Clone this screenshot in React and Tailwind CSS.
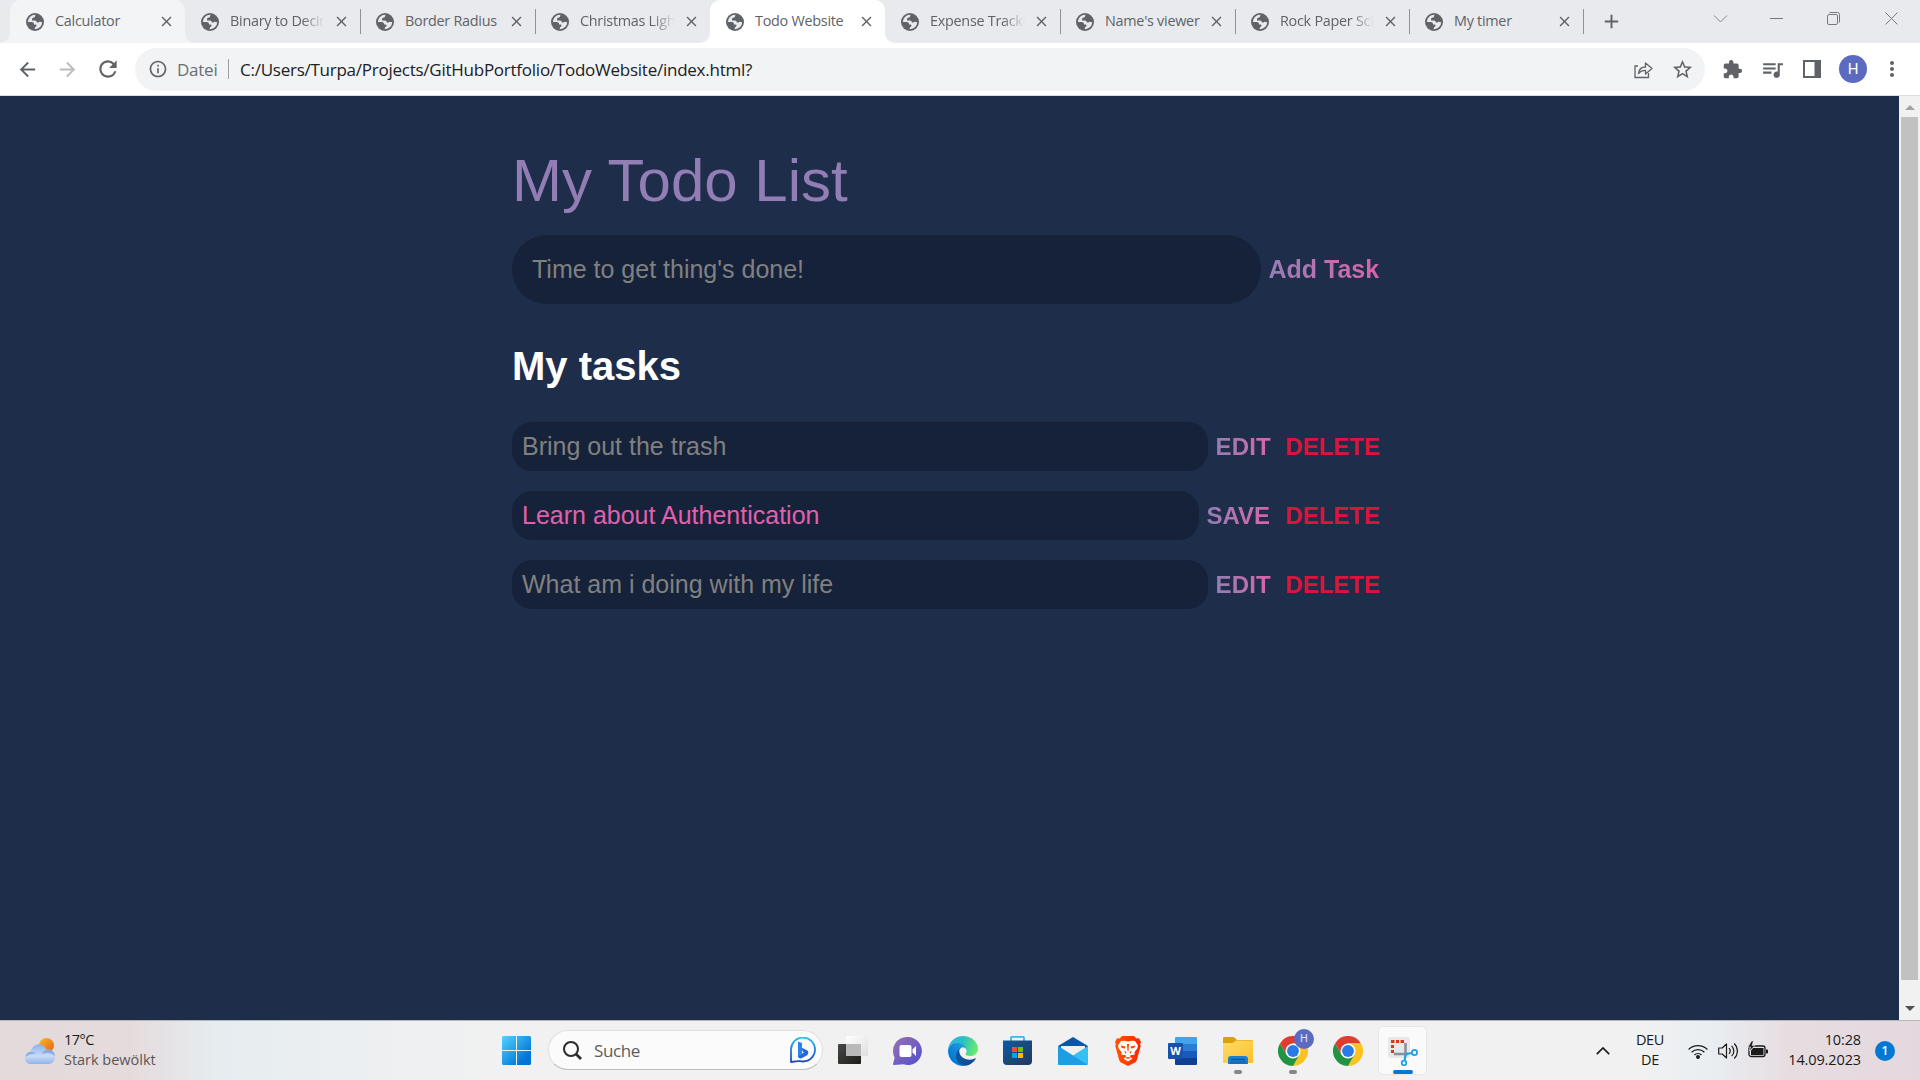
import React from "react";
import {
  MdArrowBack, MdArrowForward, MdRefresh, MdInfoOutline, MdStarBorder,
  MdExtension, MdQueueMusic, MdMoreVert, MdAdd, MdClose,
} from "react-icons/md";

const UI = "font-['Open_Sans','Noto_Sans',sans-serif]";

function Globe() {
  return (
    <svg viewBox="0 0 18 18" className="h-[18px] w-[18px] shrink-0">
      <circle cx="9" cy="9" r="9" fill="#5f6368" />
      <circle cx="9" cy="9" r="7.200" fill="#e8eaed" />
      <path d="M9.800 1.500C8.800 2.700 9.500 3.700 8.500 4.300 6.500 4.800 6 5.300 6 6.700v.9h3c1.100 0 1.800.8 1.800 2h1.700c.6-1.200 1.500-.9 4.200-.3A7.700 7.700 0 0 0 9.800 1.500z" fill="#5f6368" />
      <path d="M1.500 9h4c2 0 2.700 1 2.500 2.600h1.500c1.100 0 1.400 1 .6 1.800-1 .5-1.500 1.300-1.400 3.100A7.400 7.400 0 0 1 1.500 9z" fill="#5f6368" />
    </svg>
  );
}

const tabs = [
  { t: "Calculator", kind: "hover" },
  { t: "Binary to Decimal", sep: true, fade: true },
  { t: "Border Radius", sep: true },
  { t: "Christmas Lights", fade: true },
  { t: "Todo Website", kind: "active" },
  { t: "Expense Tracker", sep: true, fade: true },
  { t: "Name's viewer", sep: true },
  { t: "Rock Paper Scissors", sep: true, fade: true, narrow: true },
  { t: "My timer", sep: true, narrow: true },
];

function Tab({ tab }) {
  const active = tab.kind === "active";
  const hover = tab.kind === "hover";
  const fill = active ? "bg-white" : hover ? "bg-[#f3f4f6]" : "";
  const color = active ? "#ffffff" : "#f3f4f6";
  return (
    <div className={`relative flex h-[43px] shrink-0 items-center rounded-t-[10px] pl-4 ${tab.narrow ? "w-[174px]" : "w-[175px]"} ${fill}`}>
      {(active || hover) && (
        <>
          <svg viewBox="0 0 10 10" className="absolute bottom-0 -left-[10px] h-[10px] w-[10px]"><path d="M10 0v10H0A10 10 0 0 0 10 0z" fill={color} /></svg>
          <svg viewBox="0 0 10 10" className="absolute bottom-0 -right-[10px] h-[10px] w-[10px]"><path d="M0 0v10h10A10 10 0 0 1 0 0z" fill={color} /></svg>
        </>
      )}
      <Globe />
      <div className={`ml-[11px] h-[22px] overflow-hidden text-[14.400px] leading-[20px] tracking-[-0.27px] whitespace-nowrap text-[#5f6368] ${tab.narrow ? "w-[94px]" : "w-[95px]"} ${tab.fade ? "[mask-image:linear-gradient(to_right,black_76%,transparent)]" : ""}`}>
        {tab.t}
      </div>
      <MdClose className="ml-[8px] h-[17px] w-[17px] shrink-0 text-[#5f6368]" />
      {tab.sep && <div className="-mr-px ml-auto h-[25px] w-px bg-[#8f9297]" />}
    </div>
  );
}

function TabStrip() {
  return (
    <div className="flex h-[43px] bg-[#e8eaed] pl-[10px]">
      {tabs.map((t) => <Tab key={t.t} tab={t} />)}
      <MdAdd className="mt-[10px] ml-[17px] h-[23px] w-[23px] text-[#5f6368]" />
      <div className="mt-[11px] mr-[21px] ml-auto flex">
        <svg viewBox="0 0 15 15" className="h-[15px] w-[15px]" fill="none" stroke="#85888c"><path d="M1 4.500l6.500 6.500L14 4.500" /></svg>
        <svg viewBox="0 0 15 15" className="ml-[41px] h-[15px] w-[15px]" fill="none" stroke="#77797d"><path d="M1 7.500h13" /></svg>
        <svg viewBox="0 0 15 15" className="ml-[42px] h-[15px] w-[15px]" fill="none" stroke="#77797d"><rect x="1.500" y="3.500" width="10" height="10" rx="1.500" /><path d="M3.500 1.500h8a2 2 0 0 1 2 2v8" /></svg>
        <svg viewBox="0 0 15 15" className="ml-[43px] h-[15px] w-[15px]" fill="none" stroke="#77797d"><path d="M1.500 1.500l12 12M13.500 1.500l-12 12" /></svg>
      </div>
    </div>
  );
}

function Toolbar() {
  return (
    <div className="flex h-[53px] items-center border-b border-[#dadce0] bg-white pl-[16px]">
      <MdArrowBack className="h-[23px] w-[23px] text-[#5f6368]" />
      <MdArrowForward className="ml-[17px] h-[23px] w-[23px] text-[#babcbe]" />
      <MdRefresh className="ml-[16px] h-[26px] w-[26px] text-[#5f6368]" />
      <div className="ml-[14px] flex h-[43px] w-[1570px] items-center rounded-full bg-[#f1f3f4] pl-[13px]">
        <MdInfoOutline className="h-[20px] w-[20px] text-[#5f6368]" />
        <span className="mt-px ml-[9px] w-[51px] text-[17px] leading-[22px] tracking-[-0.25px] text-[#6a6e73]">Datei</span>
        <div className="h-5 w-px bg-[#9aa0a6]" />
        <span className="mt-px ml-[11px] text-[17px] leading-[22px] tracking-[-0.25px] text-[#202124]">C:/Users/Turpa/Projects/GitHubPortfolio/TodoWebsite/index.html?</span>
        <svg viewBox="0 0 19 19" className="ml-auto h-[19px] w-[19px]" fill="none" stroke="#5f6368" strokeWidth="1.300"><path d="M4 6H1v11.500h13.500V13" /><path d="M4.500 13.500c.5-4.500 3-6.500 7-6.500V3l6.500 5.500-6.500 5.500v-3.700c-3 0-5.200.8-7 3.200z" strokeLinejoin="round" /></svg>
        <MdStarBorder className="mr-[11px] ml-[18px] h-[23px] w-[23px] text-[#5f6368]" />
      </div>
      <MdExtension className="ml-[17px] h-[21px] w-[21px] text-[#5f6368]" />
      <MdQueueMusic className="ml-[17px] h-[25px] w-[25px] text-[#5f6368]" />
      <svg viewBox="0 0 18 18" className="ml-[18px] h-[18px] w-[18px]"><path d="M0 0h18v18H0zM2 2v14h9.500V2z" fill="#5f6368" fillRule="evenodd" /></svg>
      <div className="ml-[18px] flex h-[28px] w-[28px] items-center justify-center rounded-full bg-[#5c6bc0] font-['Roboto',sans-serif] text-[15px] text-white">H</div>
      <MdMoreVert className="ml-[13px] h-[24px] w-[24px] text-[#5f6368]" />
    </div>
  );
}

const tasks = [
  { text: "Bring out the trash", action: "EDIT" },
  { text: "Learn about Authentication", action: "SAVE" },
  { text: "What am i doing with my life", action: "EDIT" },
];

function TodoPage() {
  return (
    <div className="flex h-[924px] bg-[#1e2e4a]">
      <main className="ml-[512px] w-[868px] font-['Liberation_Sans',Arial,sans-serif]">
        <h1 className="mt-[50px] h-[69px] text-[60px] leading-[69px] text-[#937db5]">My Todo List</h1>
        <div className="mt-[20px] flex h-[69px] items-center">
          <div className="flex h-[69px] w-[749px] items-center rounded-[35px] bg-[#162239] pl-[20px] text-[25px] text-[#808080]">Time to get thing's done!</div>
          <button className="ml-[7.500px] bg-gradient-to-r from-[#937db5] to-[#dd60a8] bg-clip-text text-[25px] font-bold whitespace-nowrap text-transparent">Add Task</button>
        </div>
        <h2 className="mt-[39px] h-[46px] text-[40px] leading-[46px] font-bold text-white">My tasks</h2>
        <div className="mt-[33px] flex flex-col gap-[20px]">
          {tasks.map((t) => (
            <div key={t.text} className="flex h-[49px] items-center">
              <div className={`flex h-[49px] items-center rounded-[20px] bg-[#162239] pl-[10px] text-[25px] ${t.action === "SAVE" ? "w-[687px] text-[#e160ae]" : "w-[696px] text-[#808080]"}`}>{t.text}</div>
              <button className={`ml-[7.500px] bg-gradient-to-r from-[#937db5] to-[#dd60a8] bg-clip-text text-left text-[24px] font-bold text-transparent ${t.action === "SAVE" ? "w-[64px]" : "w-[57px] tracking-[0.15px]"}`}>{t.action}</button>
              <button className="ml-auto text-[24px] font-bold text-[#dc143c]">DELETE</button>
            </div>
          ))}
        </div>
      </main>
      <div className="ml-auto flex w-[21px] flex-col items-center bg-[#f1f1f1]">
        <svg viewBox="0 0 10 5" className="mt-[9px] h-[5px] w-[10px]"><path d="M5 0l5 5H0z" fill="#a3a3a3" /></svg>
        <div className="mt-[7px] h-[863px] w-[17px] bg-[#c1c1c1]" />
        <svg viewBox="0 0 10 5" className="mt-[26px] h-[5px] w-[10px]"><path d="M0 0h10L5 5z" fill="#505050" /></svg>
      </div>
    </div>
  );
}

function Weather() {
  return (
    <svg viewBox="0 0 30 26" className="h-[26px] w-[30px]">
      <defs>
        <linearGradient id="sun" x1="0" y1="0" x2="1" y2="1"><stop offset="0" stopColor="#f6b92c" /><stop offset="1" stopColor="#ea5f0c" /></linearGradient>
        <linearGradient id="cloud" x1="0" y1="0" x2="0" y2="1"><stop offset="0" stopColor="#8fb0ee" /><stop offset=".6" stopColor="#c9dbf6" /><stop offset="1" stopColor="#8fb3ef" /></linearGradient>
      </defs>
      <circle cx="21.500" cy="7.500" r="7.500" fill="url(#sun)" />
      <path d="M6 26a6 6 0 0 1-.5-12C7 9 10 6 14 6.500c4 0 6.500 2.500 7 5 5-1 9 2.500 9 7.500 0 4-2.500 7-6.500 7z" fill="url(#cloud)" />
      <path d="M17 16c1-3 3-4.500 6-4.500 4 0 7 3 7 7-3-4-8-5-13-2.500zM1 17c2-4 7-4 10-1-4-1-7 0-10.500 3z" fill="#6d93dc" opacity=".6" />
    </svg>
  );
}

function WindowsLogo() {
  return (
    <svg viewBox="0 0 29 29" className="h-[29px] w-[29px]">
      <defs><linearGradient id="win" x1="0" y1="0" x2="29" y2="29" gradientUnits="userSpaceOnUse"><stop offset="0" stopColor="#50d4ff" /><stop offset=".8" stopColor="#0274d6" /></linearGradient></defs>
      <path d="M1 0h13v14H0V1zM15 0h13l1 1v13H15zM0 15h14v14H1l-1-1zM15 15h14v13l-1 1H15z" fill="url(#win)" />
    </svg>
  );
}

function Bing() {
  return (
    <svg viewBox="0 0 26 26" className="h-[26px] w-[26px]">
      <defs><linearGradient id="bing" x1="0" y1="0" x2="0" y2="1"><stop offset="0" stopColor="#27c4e8" /><stop offset=".6" stopColor="#2170e0" /><stop offset="1" stopColor="#2146b8" /></linearGradient></defs>
      <path d="M1 25V13A12 12 0 1 1 13 24.500c-3 0-3.500-.7-5.500-.3z" fill="none" stroke="url(#bing)" strokeWidth="1.800" strokeLinejoin="round" />
      <path d="M8 4.500l4 1.500v10.500l-4 3z" fill="#2a83ee" />
      <path d="M8 19l4-2.500 2-1.200-1.300-.8-1.700-4 6 2.700c2 1.300 1.500 4-.2 5.200L12 21c-2 1.200-4 0-4-2z" fill="#2567dd" />
    </svg>
  );
}

function TaskView() {
  return (
    <svg viewBox="0 0 30 29" className="h-[29px] w-[30px]">
      <defs>
        <linearGradient id="tvd" x1="0" y1="0" x2="1" y2="1"><stop offset="0" stopColor="#484846" /><stop offset="1" stopColor="#1c1c1b" /></linearGradient>
        <linearGradient id="tvl" x1="0" y1="0" x2="1" y2="1"><stop offset="0" stopColor="#ffffff" /><stop offset="1" stopColor="#dedede" /></linearGradient>
      </defs>
      <rect x="0" y="8" width="23" height="20" rx="1" fill="url(#tvd)" />
      <rect x="8" y="0" width="22" height="20" rx="1" fill="url(#tvl)" />
      <path d="M8 8h15v12H8z" fill="#b9b9b9" />
    </svg>
  );
}

function Chat() {
  return (
    <svg viewBox="0 0 29 28" className="h-[28px] w-[29px]">
      <defs><linearGradient id="chat" x1="0" y1="0" x2="1" y2="1"><stop offset="0" stopColor="#9a70b0" /><stop offset="1" stopColor="#4e50cf" /></linearGradient></defs>
      <path d="M14.500 0a14 14 0 1 1-4 27.300L1 28c-1 0-1-1-.7-2l1.300-5.500A14 14 0 0 1 14.500 0z" fill="url(#chat)" />
      <rect x="6.500" y="8" width="12" height="12" rx="2" fill="#fff" />
      <path d="M19.500 12.500L23 9v10l-3.500-3.500z" fill="#fff" />
    </svg>
  );
}

function Edge() {
  return (
    <svg viewBox="0 0 256 256" className="h-[30px] w-[30px]">
      <defs>
        <linearGradient id="e1" x1="63" y1="177" x2="241" y2="177" gradientUnits="userSpaceOnUse"><stop offset="0" stopColor="#0c59a4" /><stop offset="1" stopColor="#114a8b" /></linearGradient>
        <linearGradient id="e2" x1="157" y1="100" x2="46" y2="221" gradientUnits="userSpaceOnUse"><stop offset="0" stopColor="#1b9de2" /><stop offset=".5" stopColor="#1387d6" /><stop offset="1" stopColor="#0078d4" /></linearGradient>
        <linearGradient id="e3" x1="20" y1="60" x2="240" y2="130" gradientUnits="userSpaceOnUse"><stop offset="0" stopColor="#35b4e8" /><stop offset=".45" stopColor="#2ac0c0" /><stop offset="1" stopColor="#66eb6e" /></linearGradient>
      </defs>
      <g transform="translate(-4.630 -4.920)">
        <path d="M235.680 195.460a93.730 93.730 0 0 1-10.540 4.710 101.870 101.870 0 0 1-35.900 6.460c-47.320 0-88.540-32.550-88.540-74.320A31.480 31.480 0 0 1 117.130 105c-42.800 1.800-53.800 46.400-53.800 72.530 0 73.880 68.090 81.370 82.760 81.370 7.910 0 19.840-2.300 27-4.560l1.310-.44a128.340 128.340 0 0 0 66.600-52.800 4 4 0 0 0-5.320-5.640z" fill="url(#e1)" />
        <path d="M110.340 246.340A79.200 79.200 0 0 1 87.600 225a80.720 80.720 0 0 1 29.530-120c3.120-1.470 8.450-4.130 15.540-4a32.350 32.350 0 0 1 25.690 13 31.880 31.880 0 0 1 6.360 18.660c0-.21 24.460-79.600-80-79.600-43.900 0-80 41.660-80 78.210a130.150 130.150 0 0 0 12.110 56 128 128 0 0 0 156.380 67.110 75.550 75.550 0 0 1-62.780-8z" fill="url(#e2)" />
        <path d="M156.940 153.750c-.81 1.050-3.300 2.500-3.300 5.660 0 2.610 1.700 5.120 4.720 7.230 14.380 10 41.490 8.680 41.560 8.680a59.560 59.560 0 0 0 30.270-8.350 61.380 61.380 0 0 0 30.430-52.880c.26-22.410-8-37.310-11.340-43.910C228.090 28.760 182.350 4.920 132.610 4.920a128 128 0 0 0-128 126.200c.48-36.540 36.800-66.050 80-66.050 3.500 0 23.460.34 42 10.070 16.340 8.580 24.900 18.940 30.850 29.210 6.180 10.670 7.280 24.150 7.280 29.520s-2.740 13.330-7.800 19.880z" fill="url(#e3)" />
      </g>
    </svg>
  );
}

function Store() {
  return (
    <svg viewBox="0 0 29 29" className="h-[29px] w-[29px]">
      <defs><linearGradient id="store" x1="0" y1="0" x2="1" y2="1"><stop offset="0" stopColor="#0e5ca5" /><stop offset="1" stopColor="#24365c" /></linearGradient></defs>
      <path d="M8 6V2q0-1.200 1.200-1.200h10.600Q21 .8 21 2v4" fill="none" stroke="#35b8ee" strokeWidth="1.800" />
      <path d="M0 4.500h29V25a4 4 0 0 1-4 4H4a4 4 0 0 1-4-4z" fill="url(#store)" />
      <path d="M9 11h5v5H9z" fill="#f25022" /><path d="M15 11h5v5h-5z" fill="#7fba00" />
      <path d="M9 17h5v5H9z" fill="#00a4ef" /><path d="M15 17h5v5h-5z" fill="#ffb900" />
    </svg>
  );
}

function Mail() {
  return (
    <svg viewBox="0 0 30 28" className="h-[28px] w-[30px]">
      <path d="M0 9L15 0l15 9v4H0z" fill="#0a57a8" />
      <path d="M3 9h24v9H3z" fill="#f0f0f0" />
      <path d="M0 9l15 9.500L30 9v18q0 1-1 1H1q-1 0-1-1z" fill="#34c0f3" />
      <path d="M0 9l29 18.500-.5.500H1q-1 0-1-1z" fill="#1f9de3" />
    </svg>
  );
}

function Brave() {
  return (
    <svg viewBox="0 0 26 30" className="h-[30px] w-[26px]">
      <defs><linearGradient id="brave" x1="0" y1="0" x2="1" y2="0"><stop offset="0" stopColor="#ff5601" /><stop offset="1" stopColor="#ff2401" /></linearGradient></defs>
      <path d="M7 0h12l2.500 2.500L24 2.300 26 6l-.8 2 .5 2-3.700 13.500c-.4 1.500-1.300 2.500-2.500 3.300L13 30l-6.500-3.200C5.300 26 4.400 25 4 23.500L.3 10l.5-2L0 6l2-3.700 2.500.2z" fill="url(#brave)" />
      <path d="M13 5.500l3.500-.8L20 5l3 4.500-.7 3L19.500 16l.3 2.500-4.300.7-.7 1.300 2.600 2.200L13 25.500l-4.400-2.800 2.600-2.200-.7-1.300-4.300-.7.3-2.500L3.700 12.500 3 9.500 6 5l3.500-.3z" fill="#fff" />
      <path d="M5.500 9.500l5 1-.6 2-3-.5zM20.500 9.500l-5 1 .6 2 3-.5zM9 14.500l2.500 1.500-.7 2zM17 14.500L14.500 16l.7 2zM12 8h2l-.5 7h-1zM10 22l3-1.300 3 1.300-3 .7z" fill="#ff4502" />
    </svg>
  );
}

function Word() {
  return (
    <svg viewBox="0 0 29 28" className="h-[28px] w-[29px]">
      <path d="M8 0h20q1 0 1 1v6H7V1q0-1 1-1z" fill="#41a5ee" />
      <path d="M7 7h22v7H7z" fill="#2b7cd3" /><path d="M7 14h22v7H7z" fill="#185abd" />
      <path d="M7 21h22v6q0 1-1 1H8q-1 0-1-1z" fill="#103f91" />
      <rect x="0" y="6" width="15" height="16" rx="1" fill="#1851ab" />
      <text x="7.500" y="18" textAnchor="middle" fontFamily="Open Sans" fontWeight="700" fontSize="11" fill="#fff">W</text>
    </svg>
  );
}

function Folder() {
  return (
    <svg viewBox="0 0 30 27" className="h-[27px] w-[30px]">
      <defs><linearGradient id="fold" x1="0" y1="0" x2="1" y2="1"><stop offset="0" stopColor="#ffdc68" /><stop offset="1" stopColor="#fbc02d" /></linearGradient></defs>
      <path d="M0 1q0-1 1-1h9q1 0 2 1l2 2h15q1 0 1 1v4H0z" fill="#dca00c" />
      <path d="M0 6h9q1 0 2-1l2-1.500h17V26H0z" fill="url(#fold)" />
      <path d="M5 27v-5q0-3 3-3h14q3 0 3 3v5z" fill="#1680d2" />
      <path d="M8 22.500h14" stroke="#0b4f92" strokeWidth="1.200" /><path d="M7 24h16v3H7z" fill="#1470bd" />
    </svg>
  );
}

function Chrome() {
  return (
    <svg viewBox="0 0 48 48" className="h-[30px] w-[30px]">
      <circle cx="24" cy="24" r="24" fill="#fff" />
      <path d="M24 12h20.800A24 24 0 0 0 3.200 12l10.400 18z" fill="#e33b2e" />
      <path d="M34.400 30L24 48A24 24 0 0 0 44.800 12H24z" fill="#fcc31e" />
      <path d="M13.600 30L3.200 12A24 24 0 0 0 24 48l10.400-18z" fill="#229342" />
      <circle cx="24" cy="24" r="12" fill="#fff" /><circle cx="24" cy="24" r="9.500" fill="#2a7ae8" />
    </svg>
  );
}

function Snip() {
  return (
    <svg viewBox="0 0 30 30" className="h-[30px] w-[30px]">
      <rect x="0" y="1" width="22" height="21" rx="2" fill="#e6e8ea" />
      <path d="M3 4h3.500v3H3zM8 4h3v3H8zM12.500 4H16v3h-3.500zM3 9h3v3H3zM3 14h3v3H3z" fill="#d13c10" />
      <path d="M17.500 7v13M6 18h14" stroke="#8a9299" strokeWidth="2.600" />
      <path d="M18 18l6-1M17.500 19l-.8 5" stroke="#21a0e2" strokeWidth="2.200" />
      <circle cx="26.500" cy="16.500" r="2.600" fill="none" stroke="#21a0e2" strokeWidth="1.800" />
      <circle cx="16" cy="27" r="2.300" fill="none" stroke="#21a0e2" strokeWidth="1.800" />
    </svg>
  );
}

function Cell({ children, dot }) {
  return (
    <div className="relative flex h-[59px] w-[55px] shrink-0 items-center justify-center">
      {children}
      {dot && <div className="absolute bottom-[6px] left-[24px] h-1 w-2 rounded-full bg-[#868686]" />}
    </div>
  );
}

function Taskbar() {
  return (
    <div className="flex h-[60px] border-t border-[#b5b6b8] bg-[linear-gradient(to_right,#e2dadb_0px,#e5dbdd_130px,#e6edf0_220px,#eceff1_350px,#f1f1f1_500px,#f1f1f1_1640px,#e9eef2_1710px,#e7dde1_1790px,#e4d8de_1920px)]">
      <div className="flex w-[489px] items-center pl-[25px]">
        <Weather />
        <div className="mb-[2px] ml-[9px] text-[14.500px] leading-[20px]">
          <div className="tracking-[-0.5px] text-[#1b1b1b]">17°C</div>
          <div className="tracking-[-0.02px] text-[#5a5757]">Stark bewölkt</div>
        </div>
      </div>
      <Cell><WindowsLogo /></Cell>
      <div className="mt-[9px] ml-[4px] flex h-[40px] w-[275px] items-center rounded-full border border-[#e0e0e0] border-b-[#bdbdbd] bg-[#fbfbfb] pl-[14px]">
        <svg viewBox="0 0 19 19" className="h-[19px] w-[19px]" fill="none" stroke="#2b2b2b" strokeWidth="2"><circle cx="8" cy="8" r="7" /><path d="M13 13l5 5" strokeWidth="2.600" /></svg>
        <span className="mt-px ml-[12px] text-[17px] leading-[22px] tracking-[-0.4px] text-[#5c5c5c]">Suche</span>
        <span className="mr-[6px] ml-auto"><Bing /></span>
      </div>
      <div className="ml-[2px] flex">
        <Cell><TaskView /></Cell>
        <Cell><Chat /></Cell>
        <Cell><Edge /></Cell>
        <Cell><Store /></Cell>
        <Cell><Mail /></Cell>
        <Cell><Brave /></Cell>
        <Cell><Word /></Cell>
        <Cell dot><Folder /></Cell>
        <Cell dot>
          <Chrome />
          <div className="absolute top-[8px] left-[29px] flex h-[20px] w-[20px] items-center justify-center rounded-full bg-[#5c6bc0] font-['Roboto',sans-serif] text-[11px] text-[#dfe3f8]">H</div>
        </Cell>
        <Cell><Chrome /></Cell>
        <div className="relative mt-[5px] ml-[3px] flex h-[49px] w-[49px] items-center justify-center rounded-[5px] border border-[#e6e6e6] bg-[#fafafa]">
          <Snip />
          <div className="absolute bottom-0 left-[14px] h-1 w-5 rounded-full bg-[#0078d4]" />
        </div>
      </div>
      <div className="mr-[25px] ml-auto flex items-center text-[14.500px] leading-[20px] text-[#1b1b1b]">
        <svg viewBox="0 0 14 8" className="h-[8px] w-[14px]" fill="none" stroke="#1b1b1b" strokeWidth="1.700"><path d="M.8 7.200L7 1l6.200 6.200" /></svg>
        <div className="mb-[1px] ml-[24px] w-[32px] text-center tracking-[-0.3px]"><div>DEU</div><div>DE</div></div>
        <svg viewBox="0 0 20 16" className="ml-[22px] h-[16px] w-[20px]" fill="none" stroke="#1b1b1b" strokeWidth="1.300"><path d="M.6 6.500a13.500 13.500 0 0 1 18.800 0M3.600 9.200a9.300 9.300 0 0 1 12.800 0M6.500 12a5 5 0 0 1 7 0" /><circle cx="10" cy="14" r="1.300" fill="#1b1b1b" /></svg>
        <svg viewBox="0 0 20 18" className="ml-[10px] h-[18px] w-[20px]" fill="none" stroke="#1b1b1b" strokeWidth="1.200"><path d="M.7 6h3.500L8.500 2v14l-4.300-4H.7z" strokeLinejoin="round" /><path d="M11 6.200c1.500 1.600 1.500 4 0 5.600M13.600 3.800c3 3 3 7.400 0 10.400M16.300 1.500c4.200 4.300 4.200 10.700 0 15" /></svg>
        <svg viewBox="0 0 20 17" className="mb-[2px] ml-[10px] h-[17px] w-[20px]"><rect x="1" y="5" width="16" height="10.500" rx="2" fill="none" stroke="#1b1b1b" strokeWidth="1.300" /><path d="M5 7h10.500v7H3V9.500zM18 8.500h1.200q.8 0 .8 1v2q0 1-.8 1H18z" fill="#1b1b1b" /><path d="M3.500 0L0 6h2.500L1.500 10 7 4.500H4L5.500 0z" fill="#1b1b1b" stroke="#edf0f3" strokeWidth=".6" /></svg>
        <div className="mb-[2px] ml-[14px] w-[79px] text-right tracking-[-0.12px] whitespace-nowrap"><div>10:28</div><div>14.09.2023</div></div>
        <div className="ml-[14px] flex h-[20px] w-[20px] items-center justify-center rounded-full bg-[#0078d4] text-[12px] font-semibold text-white">1</div>
      </div>
    </div>
  );
}

export default function App() {
  return (
    <div className={`flex h-[1080px] w-[1920px] flex-col overflow-hidden ${UI}`}>
      <TabStrip />
      <Toolbar />
      <TodoPage />
      <Taskbar />
    </div>
  );
}
